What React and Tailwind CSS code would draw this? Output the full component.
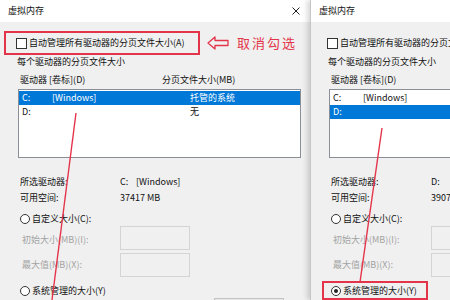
import React from "react";

const RED = "#e3344a";

const Checkbox = () => (
    <div className="w-[11px] h-[11px] border border-[#333] bg-white shrink-0"></div>
);

const Radio = ({ checked }) => (
    <div className="w-[10px] h-[10px] rounded-full border border-[#333] bg-white shrink-0 flex items-center justify-center">
        {checked && <div className="w-[4px] h-[4px] rounded-full bg-[#222]"></div>}
    </div>
);

const LeftArrow = () => (
    <svg width="22" height="14" viewBox="0 0 22 14" className="shrink-0">
        <polygon points="1,7 8,1 8,4.5 21,4.5 21,9.5 8,9.5 8,13" fill="none" stroke={RED} strokeWidth="1.3" strokeLinejoin="round" />
    </svg>
);

function Dialog({ drive, label, space, markCheckbox, markRadio, showClose }) {
    const rows = [
        { d: "C:", v: "[Windows]", size: "托管的系统" },
        { d: "D:", v: "", size: "无" },
    ];

    return (
        <div className="w-[310px] h-[300px] shrink-0 flex flex-col bg-[#f0f0f0]">
            {/* title bar */}
            <div className="h-[22px] bg-white flex items-center pl-[8px] pr-[8px] shrink-0">
                <span>虚拟内存</span>
                {showClose && (
                    <svg width="8" height="8" viewBox="0 0 8 8" className="ml-auto mr-[2px]">
                        <path d="M0.5 0.5 L7.5 7.5 M7.5 0.5 L0.5 7.5" stroke="#222" strokeWidth="1" />
                    </svg>
                )}
            </div>

            {/* auto manage */}
            <div className="flex items-center mt-[9px]">
                <div
                    className={
                        "ml-[4px] w-[196px] h-[24px] border-2 flex items-center pl-[10px] gap-[2px] shrink-0 " +
                        (markCheckbox ? "border-[#e3344a]" : "border-transparent")
                    }
                >
                    <Checkbox />
                    <span className="whitespace-nowrap">自动管理所有驱动器的分页文件大小(A)</span>
                </div>
                {markCheckbox && (
                    <>
                        <div className="ml-[7px]">
                            <LeftArrow />
                        </div>
                        <span className="ml-[8px] text-[13px] leading-[16px] tracking-[2px] text-[#e3344a] whitespace-nowrap">
                            取消勾选
                        </span>
                    </>
                )}
            </div>

            <div className="ml-[17px] h-[14px] mt-0 whitespace-nowrap">每个驱动器的分页文件大小</div>

            <div className="flex h-[14px] mt-[4px] whitespace-nowrap">
                <span className="ml-[20px] w-[142px]">驱动器 [卷标](D)</span>
                <span>分页文件大小(MB)</span>
            </div>

            {/* drive list */}
            <div className="ml-[18px] mt-[2px] w-[283px] h-[69px] shrink-0 border border-[#8a8e96] bg-white pt-[1px]">
                {rows.map((r) => (
                    <div
                        key={r.d}
                        className={
                            "flex h-[14px] items-center whitespace-nowrap " +
                            (r.d === drive + ":" ? "bg-[#0078d7] text-white" : "")
                        }
                    >
                        <span className="pl-[3px] w-[33px]">{r.d}</span>
                        <span className="w-[138px]">{r.v}</span>
                        <span>{r.size}</span>
                    </div>
                ))}
            </div>

            <div className="flex h-[14px] mt-[17px] whitespace-nowrap">
                <span className="ml-[20px] w-[100px]">所选驱动器:</span>
                <span className="w-[16px]">{drive}:</span>
                <span>{label}</span>
            </div>
            <div className="flex h-[14px] mt-[2px] whitespace-nowrap">
                <span className="ml-[20px] w-[100px]">可用空间:</span>
                <span>{space}</span>
            </div>

            <div className="flex items-center h-[14px] mt-[7px] ml-[20px] gap-[2px] whitespace-nowrap">
                <Radio checked={false} />
                <span>自定义大小(C):</span>
            </div>

            <div className="flex items-center h-[24px] shrink-0 whitespace-nowrap text-[#a3a3a3]">
                <span className="ml-[22px] w-[98px] mt-[3px]">初始大小(MB)(I):</span>
                <div className="w-[70px] h-[24px] border border-[#d4d4d4] bg-[#f0f0f0]"></div>
            </div>
            <div className="flex items-center h-[24px] mt-[3px] shrink-0 whitespace-nowrap text-[#a3a3a3]">
                <span className="ml-[22px] w-[98px]">最大值(MB)(X):</span>
                <div className="w-[70px] h-[24px] border border-[#d4d4d4] bg-[#f0f0f0]"></div>
            </div>

            <div className="flex items-start mt-[4px]">
                <div
                    className={
                        "ml-[11px] w-[106px] h-[19px] border-2 flex items-center pl-[7px] gap-[2px] shrink-0 whitespace-nowrap " +
                        (markRadio ? "border-[#e3344a]" : "border-transparent")
                    }
                >
                    <Radio checked={markRadio} />
                    <span>系统管理的大小(Y)</span>
                </div>
                <div className="ml-[97px] mt-[17px] w-[70px] h-[22px] border border-[#c4c4c4] bg-[#e6e6e6] shrink-0"></div>
            </div>
        </div>
    );
}

export default function App() {
    return (
        <div className="relative w-[450px] h-[300px] overflow-hidden bg-white text-[9px] leading-[14px] text-[#111] font-[family-name:'Noto_Sans_CJK_SC',sans-serif]">
            <div className="flex">
                <Dialog drive="C" label="[Windows]" space="37417 MB" markCheckbox showClose />
                <div className="relative z-10 border-l border-[#c6c6c6] shadow-[-3px_0_5px_rgba(0,0,0,0.15)] shrink-0">
                    <Dialog drive="D" label="" space="39074 MB" markRadio />
                </div>
            </div>

            {/* hand-drawn annotation strokes */}
            <svg className="absolute inset-0 z-20 pointer-events-none" width="450" height="300" viewBox="0 0 450 300">
                <path d="M76 113 L52 300" stroke={RED} strokeWidth="1.4" fill="none" />
                <path d="M382 128 L360 282" stroke={RED} strokeWidth="1.4" fill="none" />
            </svg>
        </div>
    );
}
